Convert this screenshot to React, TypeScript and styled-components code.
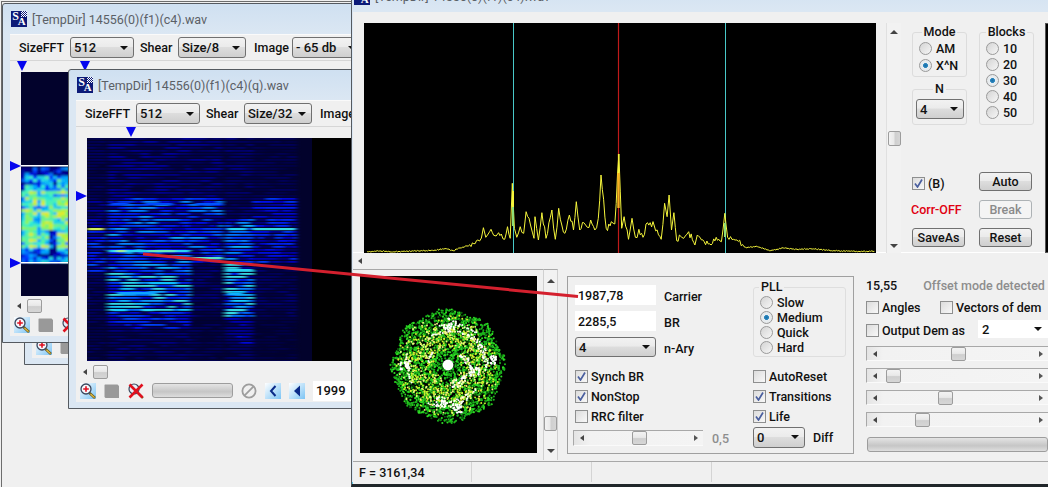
import React from "react";
import styled, { createGlobalStyle } from "styled-components";

const Global = createGlobalStyle`
  html, body { margin: 0; padding: 0; background: #f0f0f0; overflow: hidden; }
  #root { width: 1048px; height: 487px; }
`;

function rng(seed: number) {
  let s = seed;
  return () => {
    s = (s * 1664525 + 1013904223) >>> 0;
    return s / 4294967296;
  };
}

type Stop = [number, number, number, number];
function ramp(stops: Stop[], t: number) {
  const v = Math.max(0, Math.min(1, t));
  for (let i = 1; i < stops.length; i++) {
    if (v <= stops[i][0]) {
      const a = stops[i - 1];
      const b = stops[i];
      const k = (v - a[0]) / (b[0] - a[0]);
      return `rgb(${Math.round(a[1] + (b[1] - a[1]) * k)},${Math.round(a[2] + (b[2] - a[2]) * k)},${Math.round(a[3] + (b[3] - a[3]) * k)})`;
    }
  }
  const e = stops[stops.length - 1];
  return `rgb(${e[1]},${e[2]},${e[3]})`;
}
const JET: Stop[] = [
  [0, 2, 2, 40],
  [0.2, 0, 0, 110],
  [0.42, 0, 10, 235],
  [0.62, 0, 90, 255],
  [0.78, 20, 205, 255],
  [0.9, 120, 240, 170],
  [1, 235, 240, 70],
];
const HEATMAP: Stop[] = [
  [0, 0, 0, 130],
  [0.16, 0, 30, 250],
  [0.32, 0, 170, 255],
  [0.46, 50, 240, 210],
  [0.62, 150, 245, 80],
  [0.82, 250, 230, 30],
  [1, 240, 70, 20],
];

type Seg = { x: number; y: number; w: number; c: string; h: number };

function buildSpectrogram(): Seg[] {
  const r = rng(77);
  const out: Seg[] = [];
  const env = (sec: number, y: number) => {
    if (sec === 0) return y > 90 && y < 135 ? 0.46 : y > 60 && y < 90 ? 0.28 : 0.14;
    if (sec === 1) {
      if (y < 60) return 0.22;
      if (y < 112) return 0.56;
      if (y < 133) return 0.58;
      if (y < 172) return 0.78;
      if (y < 190) return 0.44;
      return 0.18;
    }
    if (sec === 2) {
      if (y < 60) return 0.2;
      if (y < 125) return 0.54;
      if (y < 180) return 0.18;
      return 0.12;
    }
    if (sec === 3) {
      if (y < 80) return 0.18;
      if (y < 125) return 0.58;
      if (y < 180) return 0.74;
      if (y < 205) return 0.3;
      return 0.16;
    }
    if (y < 60) return 0.12;
    if (y < 125) return 0.42;
    if (y < 180) return 0.16;
    return 0.08;
  };
  const secs: [number, number][] = [
    [0, 19],
    [21, 103],
    [103, 136],
    [138, 166],
    [166, 210],
  ];
  for (let y = 0; y < 223; y += 3) {
    secs.forEach(([a, b], i) => {
      let x = a;
      while (x < b) {
        const w = 4 + r() * 13;
        const t = Math.min(0.82, env(i, y) * (0.35 + r() * 0.95));
        out.push({ x, y, w: Math.min(w, b - x), c: ramp(JET, t), h: 1.8 });
        x += w;
      }
    });
  }
  const bright: [number, number, number, number][] = [
    [0, 90, 16, 0.98],
    [141, 90, 18, 0.8],
    [166, 90, 42, 0.82],
    [21, 112, 82, 0.8],
    [30, 112, 8, 0.94],
    [62, 112, 26, 0.88],
    [103, 119, 33, 0.86],
    [138, 131, 28, 0.8],
    [26, 171, 14, 0.78],
    [55, 171, 12, 0.8],
    [140, 171, 18, 0.82],
    [138, 174, 12, 0.82],
    [140, 155, 16, 0.74],
    [24, 65, 18, 0.58],
    [58, 65, 28, 0.58],
    [108, 65, 28, 0.6],
    [62, 144, 28, 0.76],
    [30, 154, 40, 0.72],
  ];
  bright.forEach(([x, y, w, t]) => out.push({ x, y, w, c: ramp(JET, t), h: 2.2 }));
  return out;
}
const SPEC = buildSpectrogram();

function buildHeat(): Seg[] {
  const r = rng(31);
  const out: Seg[] = [];
  for (let y = 95; y < 189; y += 3) {
    for (let x = 0; x < 48; x += 4) {
      const d = y - 95;
      let base = d < 8 ? 0.12 : d < 22 ? 0.34 : d < 80 ? 0.58 : 0.26;
      if (y % 12 < 3) base -= 0.12;
      if (x % 16 < 4) base -= 0.12;
      if (d > 62 && d < 85 && x > 24 && x < 36) base -= 0.35;
      out.push({ x, y, w: 4, h: 3, c: ramp(HEATMAP, base + (r() - 0.5) * 0.4) });
    }
  }
  return out;
}
const HEAT = buildHeat();

type Dot = { x: number; y: number; r: number; c: string };
function buildDots(): Dot[] {
  const r = rng(2024);
  const out: Dot[] = [];
  const R = 58;
  const shape = (a: number) => R * (0.97 + 0.03 * Math.cos(8 * a + 0.4));
  for (let i = 0; i < 2600; i++) {
    const a = r() * Math.PI * 2;
    const d = shape(a) * Math.sqrt(r()) * (0.97 + r() * 0.04);
    const k = r();
    const c = k < 0.16 ? "#0a5f0a" : k < 0.7 ? "#1cb41c" : "#2fe024";
    out.push({ x: 88 + d * Math.cos(a), y: 90 + d * Math.sin(a), r: 1.05, c });
  }
  for (let s = 0; s < 22; s++) {
    const a0 = r() * Math.PI * 2;
    const d0 = 20 + r() * 30;
    const n = 10 + Math.floor(r() * 14);
    for (let i = 0; i < n; i++) {
      const a = a0 + i * 0.035;
      const d = d0 + i * 0.35;
      out.push({ x: 88 + d * Math.cos(a), y: 90 + d * Math.sin(a), r: 0.8, c: "#063806" });
    }
  }
  for (let i = 0; i < 1000; i++) {
    const a = r() * Math.PI * 2;
    const d = 12 + (r() + r()) * 21;
    const swirl = a + d * 0.02;
    const k = r();
    out.push({
      x: 88 + d * Math.cos(swirl),
      y: 90 + d * Math.sin(swirl),
      r: 0.95,
      c: k < 0.55 ? "#d4f030" : k < 0.8 ? "#f2f680" : "#34d828",
    });
  }
  for (let s = 0; s < 16; s++) {
    const a0 = r() * Math.PI * 2;
    const d0 = s % 3 === 0 ? 14 + r() * 8 : 32 + r() * 10;
    const n = 8 + Math.floor(r() * 12);
    for (let i = 0; i < n; i++) {
      const a = a0 + i * 0.05;
      const d = d0 + i * 0.2;
      out.push({
        x: 88 + d * Math.cos(a) + (r() - 0.5) * 2.4,
        y: 90 + d * Math.sin(a) + (r() - 0.5) * 2.4,
        r: 1,
        c: r() < 0.65 ? "#ffffff" : "#f6f8a8",
      });
    }
  }
  const blobs: [number, number, number][] = [
    [-43, 0, 4], [2, -42, 5], [44, -6, 3.5], [27, 6, 4], [-7, 36, 4], [10, 42, 4],
  ];
  blobs.forEach(([x, y, s]) => {
    for (let i = 0; i < 22; i++) {
      out.push({
        x: 88 + x + (r() - 0.5) * s * 2.4,
        y: 90 + y + (r() - 0.5) * s * 2.4,
        r: 1.1,
        c: "#ffffff",
      });
    }
  });
  out.push({ x: 88, y: 89, r: 5.4, c: "#ffffff" });
  return out;
}
const DOTS = buildDots();

const RAW: [number, number][] = [
  [50, 305], [90, 303], [120, 306], [150, 304], [200, 303], [240, 301], [280, 296], [300, 302], [320, 294], [340, 288], [360, 281], [372, 270],
  [382, 264], [388, 233], [395, 262], [402, 252], [410, 238], [418, 256], [425, 258], [432, 248], [440, 252], [450, 268], [458, 230], [466, 265],
  [472, 100], [478, 235], [485, 262], [495, 230], [505, 250], [512, 185], [525, 225], [535, 265], [538, 200], [548, 270], [558, 188], [570, 265],
  [587, 180], [597, 268], [607, 175], [616, 225], [625, 250], [638, 195], [650, 240], [658, 155], [668, 240], [680, 218], [690, 232], [700, 210],
  [712, 240], [722, 205], [730, 75], [745, 235], [760, 215], [770, 222], [782, 12], [790, 235], [797, 200], [810, 268], [820, 205], [830, 262],
  [840, 238], [852, 262], [865, 218], [885, 228], [905, 268], [915, 160], [922, 200], [928, 135], [935, 240], [942, 188], [950, 272], [958, 255],
  [965, 262], [975, 258], [985, 245], [1003, 285], [1010, 255], [1030, 275], [1050, 285], [1065, 262], [1080, 275], [1090, 190], [1098, 262], [1115, 268],
  [1125, 270], [1150, 292], [1185, 290], [1220, 302], [1260, 294], [1300, 298], [1340, 296], [1400, 302], [1480, 304], [1525, 304],
];
function buildSpectrum() {
  const r = rng(9);
  const pts: string[] = [];
  const add = (x: number, y: number) =>
    pts.push(`${(350 + x / 2.908 - 364).toFixed(1)},${Math.min(230, 150 + y / 3 - 23).toFixed(1)}`);
  RAW.forEach(([x, y], i) => {
    add(x, y);
    const n = RAW[i + 1];
    if (!n) return;
    const steps = Math.floor((n[0] - x) / 3.6);
    if (steps < 2) return;
    for (let j = 1; j < steps; j++) {
      const k = j / steps;
      const yy = y + (n[1] - y) * k;
      const sign = j % 2 ? 1 : -1;
      const amp = yy > 288 ? 4 : x > 470 && x < 1000 ? 26 : 14;
      add(x + (n[0] - x) * k, Math.min(306, yy + sign * r() * amp * 0.5));
    }
  });
  return pts.join(" ");
}
const SPECTRUM = buildSpectrum();

/* --- desktop and windows --- */
const Desktop = styled.div`
  position: relative;
  width: 1048px;
  height: 487px;
  overflow: hidden;
  background: #f0f0f0;
  font-family: Roboto, "Liberation Sans", sans-serif;
  font-size: 12px;
  font-weight: 500;
  color: #111;
`;
const BackWindow = styled.div`
  position: absolute;
  left: 1px;
  top: 1px;
  width: 1100px;
  height: 500px;
  border-left: 1px solid #6d6d6d;
  border-top: 1px solid #6d6d6d;
`;
const Win = styled.div<{ $l: number; $t: number; $w: number; $h: number }>`
  position: absolute;
  left: ${(p) => p.$l}px;
  top: ${(p) => p.$t}px;
  width: ${(p) => p.$w}px;
  height: ${(p) => p.$h}px;
  box-sizing: border-box;
  border: 1px solid #555a60;
  border-top-left-radius: 3px;
  background: linear-gradient(#cfe0f1 0, #dbe7f3 30px, #dbe7f3 100%);
  padding: 0 7px 6px 7px;
  display: flex;
  flex-direction: column;
  overflow: hidden;
`;
const TitleBar = styled.div`
  flex: none;
  height: 30px;
  display: flex;
  align-items: center;
  gap: 5px;
  margin-left: 1px;
  color: #5b6066;
  font-weight: 400;
  font-size: 12.5px;
  white-space: nowrap;
`;
const Logo = styled.div`
  position: relative;
  width: 16px;
  height: 16px;
  background: #0c1a78;
  color: #fff;
  font-family: "Liberation Serif", serif;
  font-weight: 700;
  display: flex;
  justify-content: center;
  flex: none;
  &::after {
    content: "";
    position: absolute;
    right: 0;
    top: 0;
    width: 6px;
    height: 6px;
    background: repeating-conic-gradient(#fff 0 25%, #0c1a78 0 50%) 0 0 / 2px 2px;
  }
`;
const LogoS = styled.span`
  font-size: 12px;
  line-height: 11px;
`;
const LogoA = styled.span`
  font-size: 11px;
  line-height: 10px;
  align-self: flex-end;
  margin-left: -1px;
  padding-bottom: 1px;
`;
const Client = styled.div`
  flex: 1;
  min-height: 0;
  background: #f0f0f0;
  display: flex;
  flex-direction: column;
`;
const Toolbar = styled.div`
  flex: none;
  height: 27px;
  display: flex;
  align-items: center;
  padding-left: 9px;
  box-sizing: border-box;
  border-bottom: 1px solid #d6d6d6;
  border-top: 1px solid #fafafa;
`;
const ToolLabel = styled.span<{ $w: number }>`
  width: ${(p) => p.$w}px;
  flex: none;
  font-size: 12.5px;
`;
const Combo = styled.div<{ $w: number; $h?: number; $flat?: boolean; $mr?: number }>`
  width: ${(p) => p.$w}px;
  height: ${(p) => p.$h ?? 20}px;
  flex: none;
  box-sizing: border-box;
  margin-right: ${(p) => p.$mr ?? 0}px;
  border: 1px solid ${(p) => (p.$flat ? "#fff" : "#707070")};
  border-radius: ${(p) => (p.$flat ? 0 : 3)}px;
  background: ${(p) => (p.$flat ? "#fff" : "linear-gradient(#f2f2f2 0, #ebebeb 45%, #dddddd 50%, #cfcfcf 100%)")};
  display: flex;
  align-items: center;
  justify-content: space-between;
  padding: 0 5px 0 3px;
  font-size: 13px;
  white-space: nowrap;
`;
const NCombo = styled(Combo)`
  margin-left: 3px;
`;
const OutCombo = styled(Combo)`
  align-self: flex-start;
  margin-top: -1px;
`;
const Down = styled.i`
  flex: none;
  width: 0;
  height: 0;
  border-left: 4px solid transparent;
  border-right: 4px solid transparent;
  border-top: 4px solid #111;
`;
const MarkerRow = styled.div`
  flex: none;
  height: 11px;
  position: relative;
`;
const MarkerDown = styled.i<{ $x: number }>`
  position: absolute;
  top: 0;
  left: ${(p) => p.$x}px;
  width: 0;
  height: 0;
  border-left: 5.5px solid transparent;
  border-right: 5.5px solid transparent;
  border-top: 10px solid #0505ee;
`;
const PlotRow = styled.div`
  flex: 1;
  min-height: 0;
  position: relative;
  padding-left: 11px;
  display: flex;
`;
const MarkerRight = styled.i<{ $y: number }>`
  position: absolute;
  left: 0;
  top: ${(p) => p.$y}px;
  width: 0;
  height: 0;
  border-top: 5.5px solid transparent;
  border-bottom: 5.5px solid transparent;
  border-left: 11px solid #0505ee;
`;
const PlotSvg = styled.svg`
  display: block;
  flex: none;
`;

/* --- scroll bars --- */
const HBar = styled.div<{ $w: number; $h?: number }>`
  width: ${(p) => p.$w}px;
  height: ${(p) => p.$h ?? 15}px;
  flex: none;
  box-sizing: border-box;
  display: flex;
  align-items: center;
  background: linear-gradient(90deg, #e4e4e4 0, #f2f2f2 16px, #f4f4f4 100%);
  border-top: 1px solid #a8a8a8;
  border-left: 1px solid #a8a8a8;
  border-bottom: 1px solid #fafafa;
  padding: 0 5px 0 6px;
`;
const PlainBar = styled.div`
  flex: none;
  height: 15px;
  display: flex;
  align-items: center;
  padding-left: 7px;
`;
const TriL = styled.i`
  flex: none;
  width: 0;
  height: 0;
  border-top: 3.5px solid transparent;
  border-bottom: 3.5px solid transparent;
  border-right: 4px solid #444;
`;
const TriR = styled.i`
  flex: none;
  width: 0;
  height: 0;
  margin-left: auto;
  border-top: 3.5px solid transparent;
  border-bottom: 3.5px solid transparent;
  border-left: 4px solid #555;
`;
const TriU = styled.i`
  flex: none;
  width: 0;
  height: 0;
  border-left: 4px solid transparent;
  border-right: 4px solid transparent;
  border-bottom: 4px solid #444;
`;
const TriD = styled.i`
  flex: none;
  width: 0;
  height: 0;
  border-left: 4px solid transparent;
  border-right: 4px solid transparent;
  border-top: 4px solid #444;
`;
const Thumb = styled.i<{ $m: number }>`
  flex: none;
  width: 15px;
  height: 14px;
  margin-left: ${(p) => p.$m}px;
  box-sizing: border-box;
  border: 1px solid #9c9c9c;
  border-radius: 2px;
  background: linear-gradient(#f3f3f3 0, #e9e9e9 45%, #cfcfcf 55%, #d6d6d6 100%);
`;
const VThumb = styled.i<{ $m: number }>`
  flex: none;
  width: 13px;
  height: 15px;
  margin-top: ${(p) => p.$m}px;
  margin-bottom: auto;
  box-sizing: border-box;
  border: 1px solid #9c9c9c;
  border-radius: 2px;
  background: linear-gradient(90deg, #f3f3f3 0, #e9e9e9 45%, #cfcfcf 55%, #d6d6d6 100%);
`;
const VBar = styled.div`
  flex: none;
  width: 15px;
  box-sizing: border-box;
  display: flex;
  flex-direction: column;
  align-items: center;
  padding: 7px 0 5px;
  background: #f2f2f2;
`;
const SpectrumBar = styled(VBar)`
  margin-left: 10px;
  height: 230px;
  border-left: 1px solid #e0e0e0;
`;
const Progress = styled.div<{ $w: number }>`
  width: ${(p) => p.$w}px;
  height: 15px;
  flex: none;
  box-sizing: border-box;
  border: 1px solid #9d9d9d;
  border-radius: 3px;
  background: linear-gradient(#e4e4e4 0, #cdcdcd 45%, #c6c6c6 60%, #dedede 100%);
`;

/* --- bottom strip of the child windows --- */
const IconBar = styled.div`
  flex: none;
  height: 23px;
  padding-left: 4px;
  display: flex;
  align-items: center;
  gap: 8px;
`;
const IconSvg = styled.svg`
  flex: none;
  display: block;
`;
const Frame = styled.div`
  flex: none;
  width: 40px;
  height: 20px;
  background: #fff;
  font-size: 13px;
  display: flex;
  align-items: center;
  padding-left: 3px;
`;

const ZoomIcon = () => (
  <IconSvg width="16" height="16" viewBox="0 0 16 16">
    <defs>
      <linearGradient id="tile" x1="0" y1="0" x2="1" y2="1">
        <stop offset="0" stopColor="#ffffff" />
        <stop offset="1" stopColor="#7cc4f4" />
      </linearGradient>
    </defs>
    <rect width="16" height="16" fill="url(#tile)" />
    <line x1="9.500" y1="10" x2="15" y2="15" stroke="#6a5a20" strokeWidth="2.600" />
    <line x1="10.500" y1="11" x2="14.500" y2="14.600" stroke="#e8c040" strokeWidth="1.200" />
    <circle cx="6" cy="6" r="5" fill="#f4f6fa" stroke="#39465c" strokeWidth="1.300" />
    <path d="M3.200 6h5.600M6 3.200v5.600" stroke="#e01020" strokeWidth="1.600" />
  </IconSvg>
);
const GrayIcon = () => (
  <IconSvg width="16" height="16" viewBox="0 0 16 16">
    <path d="M1 1.500h12.500l1.500 1.500v12H1.500l-1-1V2z" fill="#999" />
  </IconSvg>
);
const CrossIcon = () => (
  <IconSvg width="16" height="16" viewBox="0 0 16 16">
    <circle cx="6" cy="6" r="5" fill="#e6eef8" stroke="#39465c" strokeWidth="1.200" />
    <line x1="10" y1="10" x2="15" y2="15" stroke="#6a5a20" strokeWidth="2.200" />
    <path d="M1.500 1.500L14.500 14.500M14.500 1.500L1.500 14.500" stroke="#e0101e" strokeWidth="2.600" />
  </IconSvg>
);
const NoIcon = () => (
  <IconSvg width="16" height="16" viewBox="0 0 16 16">
    <circle cx="8" cy="8" r="6.600" fill="none" stroke="#9d9d9d" strokeWidth="1.800" />
    <line x1="3.400" y1="12.600" x2="12.600" y2="3.400" stroke="#9d9d9d" strokeWidth="1.800" />
  </IconSvg>
);
const PrevIcon = ({ solid }: { solid?: boolean }) => (
  <IconSvg width="16" height="16" viewBox="0 0 16 16">
    <defs>
      <linearGradient id="tile2" x1="0" y1="0" x2="1" y2="1">
        <stop offset="0" stopColor="#ffffff" />
        <stop offset="1" stopColor="#7cc4f4" />
      </linearGradient>
    </defs>
    <rect width="16" height="16" fill="url(#tile2)" />
    {solid ? (
      <path d="M11 2.500v11L5 8z" fill="#0a2a88" />
    ) : (
      <path d="M10.500 3L6 8l4.500 5" fill="none" stroke="#0a2a88" strokeWidth="2" />
    )}
  </IconSvg>
);

const Spectrogram = () => (
  <PlotSvg width="270" height="223" viewBox="0 0 270 223">
    <defs>
      <filter id="sb" x="-10%" y="-10%" width="120%" height="120%">
        <feGaussianBlur stdDeviation="2.200 0.750" />
      </filter>
    </defs>
    <rect width="225" height="223" fill="#02022c" />
    <rect x="225" width="45" height="223" fill="#000" />
    <g filter="url(#sb)">
      {SPEC.map((s, i) => (
        <rect key={i} x={s.x} y={s.y} width={s.w} height={s.h} fill={s.c} />
      ))}
    </g>
  </PlotSvg>
);

const SmallSpectrogram = () => (
  <PlotSvg width="70" height="224" viewBox="0 0 70 224">
    <defs>
      <filter id="hb">
        <feGaussianBlur stdDeviation="1" />
      </filter>
    </defs>
    <rect width="70" height="224" fill="#02022c" />
    <g filter="url(#hb)">
      {HEAT.map((s, i) => (
        <rect key={i} x={s.x} y={s.y} width={s.w} height={s.h} fill={s.c} />
      ))}
    </g>
    <rect y="93" width="70" height="1.500" fill="#fff" />
    <rect y="190" width="70" height="1.500" fill="#fff" />
  </PlotSvg>
);

const Logotype = () => (
  <Logo>
    <LogoS>S</LogoS>
    <LogoA>A</LogoA>
  </Logo>
);

/* --- main window --- */
const MainClient = styled.div`
  flex: 1;
  min-height: 0;
  background: #f0f0f0;
  display: flex;
  flex-direction: column;
`;
const TopRow = styled.div`
  flex: none;
  height: 241px;
  box-sizing: border-box;
  padding: 11px 0 0 11px;
  display: flex;
  border-bottom: 1px solid #fff;
`;
const Panel = styled.div`
  flex: none;
  width: 133px;
  margin-left: 11px;
  height: 230px;
  display: flex;
  flex-direction: column;
`;
const GroupsRow = styled.div`
  margin-top: 3px;
  display: grid;
  grid-template-columns: 55px 55px;
  column-gap: 12px;
`;
const GroupsCol = styled.div`
  display: flex;
  flex-direction: column;
  gap: 6px;
`;
const Group = styled.fieldset<{ $h: number; $gap: number }>`
  margin: 0;
  box-sizing: border-box;
  height: ${(p) => p.$h}px;
  padding: 4px 0 0 0;
  border: 1px solid #dcdcdc;
  border-radius: 3px;
  display: flex;
  flex-direction: column;
  gap: ${(p) => p.$gap}px;
  min-width: 0;
`;
const GroupTitle = styled.legend<{ $left?: boolean }>`
  padding: 0 2px;
  line-height: 12px;
  font-size: 12.5px;
  margin: ${(p) => (p.$left ? "0 0 0 5px" : "0 auto")};
`;
const Line = styled.div<{ $gap?: number; $w?: number }>`
  display: flex;
  align-items: center;
  gap: ${(p) => p.$gap ?? 3}px;
  height: 13px;
  ${(p) => (p.$w ? `width: ${p.$w}px; flex: none;` : "")}
  white-space: nowrap;
  font-size: 12.5px;
`;
const RadioLine = styled(Line)`
  margin-left: 6px;
  gap: 4px;
`;
const BLine = styled(Line)`
  margin-top: 4px;
`;
const Radio = styled.i<{ $on?: boolean }>`
  flex: none;
  width: 13px;
  height: 13px;
  box-sizing: border-box;
  border-radius: 50%;
  border: 1px solid #9a9a9a;
  background: ${(p) =>
    p.$on
      ? "radial-gradient(circle, #1a6fa8 0, #2a85bd 28%, #e8eef2 34%, #e4e4e4 100%)"
      : "linear-gradient(135deg, #d4d4d4, #f6f6f6)"};
`;
const Box = styled.span`
  flex: none;
  width: 13px;
  height: 13px;
  box-sizing: border-box;
  border: 1px solid #8e8f8f;
  background: linear-gradient(135deg, #dcdcdc, #f8f8f8);
  display: flex;
  align-items: center;
  justify-content: center;
`;
const Check = ({ on }: { on?: boolean }) => (
  <Box>
    {on && (
      <svg width="9" height="9" viewBox="0 0 9 9">
        <path d="M1 4.500L3.500 8L8 0.500" fill="none" stroke="#4a5f9f" strokeWidth="1.700" />
      </svg>
    )}
  </Box>
);
const ButtonsGrid = styled.div`
  margin-top: auto;
  margin-bottom: 6px;
  display: grid;
  grid-template-columns: 55px 53px;
  column-gap: 12px;
  row-gap: 9px;
  align-items: center;
`;
const Btn = styled.div<{ $off?: boolean; $w?: number }>`
  height: 19px;
  width: ${(p) => p.$w ?? 53}px;
  box-sizing: border-box;
  border: 1px solid ${(p) => (p.$off ? "#adb2b5" : "#707070")};
  border-radius: 3px;
  background: ${(p) => (p.$off ? "#f4f4f4" : "linear-gradient(#f2f2f2 0, #ebebeb 45%, #dddddd 50%, #cfcfcf 100%)")};
  color: ${(p) => (p.$off ? "#8a8a8a" : "#111")};
  display: flex;
  align-items: center;
  justify-content: center;
  font-size: 12.5px;
`;
const CorrOff = styled.span`
  color: #e00010;
  font-size: 12.5px;
  margin-left: -1px;
  white-space: nowrap;
`;
const Edge = styled.div`
  flex: none;
  width: 40px;
  height: 230px;
  background: #000;
  border: 1px solid #555;
  border-right: none;
  box-sizing: border-box;
`;
const ScrollRow = styled.div`
  flex: none;
  height: 16px;
  display: flex;
  align-items: center;
  padding-left: 5px;
`;
const BottomRow = styled.div`
  flex: none;
  height: 191px;
  display: flex;
`;
const ScopePane = styled.div`
  flex: none;
  width: 190px;
  box-sizing: border-box;
  padding: 6px 0 0 7px;
  border-top: 1px solid #a8a8a8;
`;
const ScopeBar = styled(VBar)`
  height: 191px;
  border-top: 1px solid #a8a8a8;
  border-left: 1px solid #d0d0d0;
  border-right: 1px solid #d0d0d0;
  padding: 9px 0 7px;
`;
const Settings = styled.div`
  flex: none;
  width: 287px;
  height: 178px;
  margin: 7px 0 0 9px;
  box-sizing: border-box;
  border: 1px solid #a0a0a0;
  padding: 8px 0 0 7px;
  display: grid;
  grid-template-columns: 178px 1fr;
`;
const Col = styled.div`
  display: flex;
  flex-direction: column;
`;
const FieldRow = styled.div<{ $mb?: number }>`
  display: flex;
  align-items: center;
  gap: 8px;
  height: 20px;
  margin-bottom: ${(p) => p.$mb ?? 6}px;
  font-size: 12.5px;
`;
const DiffRow = styled(FieldRow)`
  margin-top: 4px;
`;
const FieldLabel = styled.span`
  margin-top: 2px;
`;
const Input = styled.div<{ $w: number }>`
  width: ${(p) => p.$w}px;
  height: 20px;
  flex: none;
  box-sizing: border-box;
  background: #fff;
  padding-left: 3px;
  display: flex;
  align-items: center;
  font-size: 12.5px;
`;
const Checks = styled.div<{ $mt: number }>`
  margin-top: ${(p) => p.$mt}px;
  display: flex;
  flex-direction: column;
  gap: 7px;
`;
const SliderRow = styled.div`
  margin: 7px 0 0 -2px;
  display: flex;
  align-items: center;
  gap: 9px;
  height: 16px;
`;
const Muted = styled.span`
  color: #8d8d8d;
  font-size: 12.5px;
`;
const PllGroup = styled(Group)`
  width: 93px;
  margin-top: -4px;
  padding: 3px 0 0 0;
  border-color: #dedede;
`;
const Side = styled.div`
  flex: none;
  width: 182px;
  margin-left: 12px;
  padding-top: 9px;
  display: flex;
  flex-direction: column;
`;
const InfoRow = styled.div`
  height: 14px;
  display: flex;
  gap: 26px;
  font-size: 12.5px;
  white-space: nowrap;
`;
const OptRow = styled.div<{ $mt: number; $h: number }>`
  margin-top: ${(p) => p.$mt}px;
  height: ${(p) => p.$h}px;
  display: flex;
  align-items: center;
`;
const SideBars = styled.div`
  margin-top: 7px;
  display: flex;
  flex-direction: column;
  gap: 7px;
`;
const SideProgress = styled(Progress)`
  margin: 10px 0 0 1px;
`;
const StatusBar = styled.div`
  flex: none;
  height: 21px;
  box-sizing: border-box;
  border-top: 1px solid #a8a8a8;
  display: flex;
  margin-top: 1px;
  font-size: 12.5px;
`;
const StatusCell = styled.div<{ $w: number }>`
  width: ${(p) => p.$w}px;
  flex: none;
  box-sizing: border-box;
  border-right: 1px solid #d4d4d4;
  padding-left: 6px;
  display: flex;
  align-items: center;
`;
const MainWin = styled(Win)`
  padding: 0 0 0 1px;
  border: none;
  border-left: 1px solid #555a60;
  border-radius: 0;
  border-bottom: 3px solid #20262a;
  box-shadow: inset 0 -2px 0 #5cc3e0;
`;
const MainTitle = styled(TitleBar)`
  height: 31px;
  margin-left: 1px;
  flex: none;
`;
const Overlay = styled.svg`
  position: absolute;
  left: 0;
  top: 0;
  pointer-events: none;
`;

const Radios = ({ items, on }: { items: string[]; on: string }) => (
  <>
    {items.map((t) => (
      <RadioLine key={t}>
        <Radio $on={t === on} />
        {t}
      </RadioLine>
    ))}
  </>
);

const Bottom = () => (
  <IconBar>
    <ZoomIcon />
    <GrayIcon />
    <CrossIcon />
    <Progress $w={81} />
    <NoIcon />
    <PrevIcon />
    <PrevIcon solid />
    <Frame>1999</Frame>
  </IconBar>
);

const Tool = ({ shear, image }: { shear: string; image: string }) => (
  <Toolbar>
    <ToolLabel $w={51}>SizeFFT</ToolLabel>
    <Combo $w={64} $h={21} $mr={6}>
      512
      <Down />
    </Combo>
    <ToolLabel $w={38}>Shear</ToolLabel>
    <Combo $w={68} $h={21} $mr={8}>
      {shear}
      <Down />
    </Combo>
    <ToolLabel $w={38}>Image</ToolLabel>
    <Combo $w={70} $h={21}>
      {image}
      <Down />
    </Combo>
  </Toolbar>
);

export default function App() {
  return (
    <Desktop>
      <Global />
      <BackWindow />
      <Win $l={24} $t={200} $w={360} $h={165}>
        <Client>
          <PlotRow />
          <IconBar>
            <ZoomIcon />
            <GrayIcon />
          </IconBar>
        </Client>
      </Win>
      <Win $l={2} $t={3} $w={400} $h={340}>
        <TitleBar>
          <Logotype />
          [TempDir] 14556(0)(f1)(c4).wav
        </TitleBar>
        <Client>
          <Tool shear="Size/8" image="- 65 db" />
          <MarkerRow>
            <MarkerDown $x={7} />
            <MarkerDown $x={70} />
          </MarkerRow>
          <PlotRow>
            <MarkerRight $y={89} />
            <MarkerRight $y={186} />
            <SmallSpectrogram />
          </PlotRow>
          <PlainBar>
            <TriL />
            <Thumb $m={6} />
          </PlainBar>
          <Bottom />
        </Client>
      </Win>
      <Win $l={68} $t={69} $w={400} $h={340}>
        <TitleBar>
          <Logotype />
          [TempDir] 14556(0)(f1)(c4)(q).wav
        </TitleBar>
        <Client>
          <Tool shear="Size/32" image="- 65 db" />
          <MarkerRow>
            <MarkerDown $x={50} />
          </MarkerRow>
          <PlotRow>
            <MarkerRight $y={53} />
            <Spectrogram />
          </PlotRow>
          <PlainBar>
            <TriL />
            <Thumb $m={6} />
          </PlainBar>
          <Bottom />
        </Client>
      </Win>
      <MainWin $l={351} $t={-19} $w={760} $h={506}>
        <MainTitle>
          <Logotype />
          [TempDir] 14556(0)(f1)(c4).wav
        </MainTitle>
        <MainClient>
          <TopRow>
            <PlotSvg width="512" height="230" viewBox="0 0 512 230">
              <rect width="512" height="230" fill="#000" />
              <line x1="149.500" y1="0" x2="149.500" y2="230" stroke="#48c8c8" />
              <line x1="361.500" y1="0" x2="361.500" y2="230" stroke="#48c8c8" />
              <line x1="254.500" y1="0" x2="254.500" y2="230" stroke="#c01a1a" strokeWidth="1.200" />
              <polyline points={SPECTRUM} fill="none" stroke="#f6f63c" strokeWidth="1" />
              <line x1="149" y1="168" x2="149" y2="184" stroke="#f6f63c" strokeWidth="2" />
              <line x1="149" y1="184" x2="149" y2="203" stroke="#8ee078" strokeWidth="2" />
              <line x1="361" y1="200" x2="361" y2="214" stroke="#8ee078" strokeWidth="2" />
              <line x1="254.500" y1="131" x2="254.500" y2="150" stroke="#f6f63c" strokeWidth="1.200" />
              <line x1="254.500" y1="150" x2="254.500" y2="185" stroke="#f8b020" strokeWidth="2.400" />
            </PlotSvg>
            <SpectrumBar>
              <TriU />
              <VThumb $m={97} />
              <TriD />
            </SpectrumBar>
            <Panel>
              <GroupsRow>
                <GroupsCol>
                  <Group $h={51} $gap={4}>
                    <GroupTitle>Mode</GroupTitle>
                    <Radios items={["AM", "X^N"]} on="X^N" />
                  </Group>
                  <Group $h={42} $gap={0}>
                    <GroupTitle>N</GroupTitle>
                    <NCombo $w={48} $h={20}>
                      4
                      <Down />
                    </NCombo>
                  </Group>
                </GroupsCol>
                <Group $h={99} $gap={3}>
                  <GroupTitle>Blocks</GroupTitle>
                  <Radios items={["10", "20", "30", "40", "50"]} on="30" />
                </Group>
              </GroupsRow>
              <ButtonsGrid>
                <BLine>
                  <Check on />
                  (B)
                </BLine>
                <Btn>Auto</Btn>
                <CorrOff>Corr-OFF</CorrOff>
                <Btn $off>Break</Btn>
                <Btn>SaveAs</Btn>
                <Btn>Reset</Btn>
              </ButtonsGrid>
            </Panel>
            <Edge />
          </TopRow>
          <ScrollRow>
            <TriL />
          </ScrollRow>
          <BottomRow>
            <ScopePane>
              <PlotSvg width="177" height="177" viewBox="0 0 177 177">
                <rect width="177" height="177" fill="#000" />
                {DOTS.map((d, i) => (
                  <circle key={i} cx={d.x} cy={d.y} r={d.r} fill={d.c} />
                ))}
              </PlotSvg>
            </ScopePane>
            <ScopeBar>
              <TriU />
              <VThumb $m={133} />
              <TriD />
            </ScopeBar>
            <Settings>
              <Col>
                <FieldRow>
                  <Input $w={81}>1987,78</Input>
                  <FieldLabel>Carrier</FieldLabel>
                </FieldRow>
                <FieldRow>
                  <Input $w={81}>2285,5</Input>
                  <FieldLabel>BR</FieldLabel>
                </FieldRow>
                <FieldRow $mb={0}>
                  <Combo $w={81}>
                    4
                    <Down />
                  </Combo>
                  <FieldLabel>n-Ary</FieldLabel>
                </FieldRow>
                <Checks $mt={13}>
                  <Line>
                    <Check on />
                    Synch BR
                  </Line>
                  <Line>
                    <Check on />
                    NonStop
                  </Line>
                  <Line>
                    <Check />
                    RRC filter
                  </Line>
                </Checks>
                <SliderRow>
                  <HBar $w={130} $h={16}>
                    <TriL />
                    <Thumb $m={48} />
                    <TriR />
                  </HBar>
                  <Muted>0,5</Muted>
                </SliderRow>
              </Col>
              <Col>
                <PllGroup $h={76} $gap={2}>
                  <GroupTitle $left>PLL</GroupTitle>
                  <Radios items={["Slow", "Medium", "Quick", "Hard"]} on="Medium" />
                </PllGroup>
                <Checks $mt={13}>
                  <Line>
                    <Check />
                    AutoReset
                  </Line>
                  <Line>
                    <Check on />
                    Transitions
                  </Line>
                  <Line>
                    <Check on />
                    Life
                  </Line>
                </Checks>
                <DiffRow $mb={0}>
                  <Combo $w={52} $h={21}>
                    0
                    <Down />
                  </Combo>
                  Diff
                </DiffRow>
              </Col>
            </Settings>
            <Side>
              <InfoRow>
                15,55
                <Muted>Offset mode detected</Muted>
              </InfoRow>
              <OptRow $mt={8} $h={14}>
                <Line $w={74}>
                  <Check />
                  Angles
                </Line>
                <Line>
                  <Check />
                  Vectors of dem
                </Line>
              </OptRow>
              <OptRow $mt={7} $h={18}>
                <Line $w={112}>
                  <Check />
                  Output Dem as
                </Line>
                <OutCombo $w={70} $h={18} $flat>
                  2
                  <Down />
                </OutCombo>
              </OptRow>
              <SideBars>
                <HBar $w={182}>
                  <TriL />
                  <Thumb $m={74} />
                  <TriR />
                </HBar>
                <HBar $w={182}>
                  <TriL />
                  <Thumb $m={9} />
                  <TriR />
                </HBar>
                <HBar $w={182}>
                  <TriL />
                  <Thumb $m={61} />
                  <TriR />
                </HBar>
                <HBar $w={182}>
                  <TriL />
                  <Thumb $m={38} />
                  <TriR />
                </HBar>
              </SideBars>
              <SideProgress $w={181} />
            </Side>
          </BottomRow>
          <StatusBar>
            <StatusCell $w={119}>F = 3161,34</StatusCell>
            <StatusCell $w={120} />
            <StatusCell $w={120} />
          </StatusBar>
        </MainClient>
      </MainWin>
      <Overlay width="1048" height="487" viewBox="0 0 1048 487">
        <line x1="143" y1="254" x2="578" y2="296.500" stroke="#d4202e" strokeWidth="3" />
      </Overlay>
    </Desktop>
  );
}
